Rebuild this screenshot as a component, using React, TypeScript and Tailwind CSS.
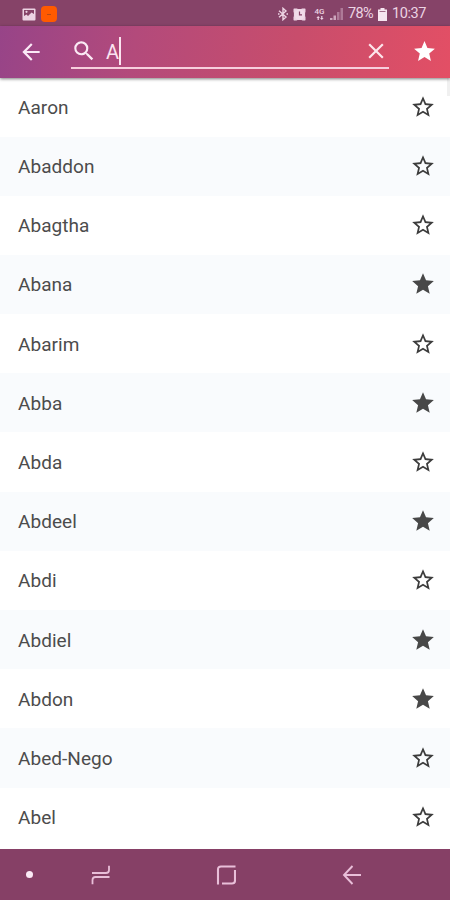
import React, { useState } from 'react';
import {
  MdArrowBack,
  MdClose,
  MdSearch,
  MdStar,
  MdStarBorder,
} from 'react-icons/md';

interface NameEntry {
  name: string;
  favorite: boolean;
}

const NAMES: NameEntry[] = [
  { name: 'Aaron', favorite: false },
  { name: 'Abaddon', favorite: false },
  { name: 'Abagtha', favorite: false },
  { name: 'Abana', favorite: true },
  { name: 'Abarim', favorite: false },
  { name: 'Abba', favorite: true },
  { name: 'Abda', favorite: false },
  { name: 'Abdeel', favorite: true },
  { name: 'Abdi', favorite: false },
  { name: 'Abdiel', favorite: true },
  { name: 'Abdon', favorite: true },
  { name: 'Abed-Nego', favorite: false },
  { name: 'Abel', favorite: false },
];

const StatusBar = () => (
  <div className="flex h-[26px] shrink-0 items-center bg-[#864368] pl-[22px] pr-[23px] pt-[2px] text-[#ecd3e3]">
    <svg className="h-[13px] w-[14px]" viewBox="0 0 14 13">
      <rect x="0.5" y="0.5" width="13" height="12" rx="1" fill="#ecd3e3" />
      <path d="M2 2h10v4L9.500 4.500 6 8 4.500 6.500 2 8z" fill="#864368" />
      <circle cx="4.500" cy="3.800" r="1.100" fill="#ecd3e3" />
    </svg>
    <div className="ml-[5px] flex h-4 w-4 items-center justify-center rounded-[4px] bg-[#ff5a00]">
      <div className="h-px w-1 bg-[#b84a10]" />
    </div>
    <div className="ml-auto flex items-center">
      <svg className="h-[14px] w-[10px]" viewBox="0 0 10 14" fill="none" stroke="currentColor" strokeWidth="1.400">
        <path d="M1 3.800L8 10 5 12.700V1.300L8 4 1 10.200M0 7h1.500M8.500 7H10" />
      </svg>
      <svg className="ml-[5px] h-[13px] w-[13px]" viewBox="0 0 13 13">
        <path d="M1 .5h3l.8.6h3.400l.8-.6h3l.5.5v3l-.4.8v3.400l.4.8v3l-.5.5H9.500L8.500 12h-4l-1 .5H1l-.5-.5V9l.4-.8V4.800L.5 4V1z" fill="currentColor" />
        <circle cx="6.500" cy="6.500" r="5.200" fill="#f1dcea" />
        <path d="M6.500 3.500v3.300H9" fill="none" stroke="#864368" strokeWidth="1.200" />
      </svg>
      <div className="ml-[8px] flex w-[11px] flex-col items-center">
        <span className="text-[8px] font-medium leading-[8px]">4G</span>
        <svg className="h-[4px] w-[8px]" viewBox="0 0 9 5">
          <path d="M0 2.500L2.200 0l2.200 2.500H3V5H1.500V2.500zM4.600 2.500H6V0h1.500v2.500H9L6.800 5z" fill="currentColor" />
        </svg>
      </div>
      <svg className="ml-[5px] h-[12px] w-[13px]" viewBox="0 0 13 12">
        <path d="M0 12v-2h2.500v2zM3.500 12V7.500H6V12z" fill="#cda7bd" />
        <path d="M7 12V4h2.500v8zM10.500 12V0H13v12z" fill="#ae7a98" />
      </svg>
      <span className="ml-[5px] w-[26px] whitespace-nowrap pt-px text-[14.5px] leading-none tracking-[-0.6px]">78%</span>
      <svg className="ml-[4px] h-[13px] w-[9px]" viewBox="0 0 9 13">
        <path d="M2.500 0h4v1.500H9V13H0V1.500h2.500z" fill="#f6e5f0" />
        <path d="M1.500 3h6v1h-6z" fill="#a36d8a" />
      </svg>
      <span className="ml-[5px] w-[35px] whitespace-nowrap pt-px text-[14.5px] leading-none tracking-[-0.4px]">10:37</span>
    </div>
  </div>
);

const SearchBar = () => (
  <header className="z-10 flex h-[52px] shrink-0 items-center bg-[linear-gradient(100deg,#974488_0%,#b34a7b_30%,#c84d6c_65%,#e34f65_100%)] pb-px pl-[18px] pr-[13px] text-white shadow-[0_1px_3px_rgba(0,0,0,0.5)]">
    <button aria-label="Back">
      <MdArrowBack className="h-[26px] w-[26px] text-[#fbe9f6]" />
    </button>
    <div className="ml-[27px] flex h-[34px] w-[318px] items-center border-b-2 border-[#f7cfdd]">
      <MdSearch className="h-[26px] w-[26px] text-[#fbe9f4]" />
      <span className="ml-[9px] pt-[2px] text-[20px] leading-none text-[#fbe4f0]">A</span>
      <span className="h-7 w-[2px] bg-[#fbe4f0]" />
      <button className="ml-auto" aria-label="Clear">
        <MdClose className="h-[26px] w-[26px] text-[#fde6ec]" />
      </button>
    </div>
    <button className="ml-auto" aria-label="Favorites">
      <MdStar className="h-[25px] w-[25px]" />
    </button>
  </header>
);

const NavigationBar = () => (
  <nav className="flex h-[51px] shrink-0 items-center bg-[#864066] pl-[26px] text-[#e9bfd9]">
    <span className="h-[7px] w-[7px] rounded-full bg-[#fbeaf5]" />
    <svg className="ml-[58px] h-5 w-5" viewBox="0 0 20 20" fill="none" stroke="currentColor" strokeWidth="1.800">
      <path d="M1 8H15q3 0 3-3V0.800" />
      <path d="M18.500 12H4.500q-3 0-3 3v4.200" />
    </svg>
    <svg className="ml-[105px] h-5 w-5" viewBox="0 0 20 20" fill="none" stroke="currentColor" strokeWidth="2.100">
      <path d="M2 19.500V4.500q0-3 3-3H19.500" />
      <path d="M19 5v10.500q0 3-3 3H6" />
    </svg>
    <svg className="ml-[106px] h-5 w-[19px]" viewBox="0 0 19 20" fill="none" stroke="currentColor" strokeWidth="1.900">
      <path d="M10.500 1L2 10l8.500 9M2 10h17" />
    </svg>
  </nav>
);

export default function App() {
  const [names, setNames] = useState<NameEntry[]>(NAMES);

  const toggleFavorite = (name: string) => {
    setNames(prev =>
      prev.map(entry => (entry.name === name ? { ...entry, favorite: !entry.favorite } : entry))
    );
  };

  return (
    <div className="flex h-[900px] w-[450px] flex-col overflow-hidden bg-white font-['Roboto',sans-serif]">
      <StatusBar />
      <SearchBar />
      <main className="relative h-[771px] overflow-hidden">
        <ul className="mt-[-0.7px]">
          {names.map((entry) => (
            <li
              key={entry.name}
              className="flex h-[59.2px] items-center justify-between pl-[18px] pr-[14px] odd:bg-white even:bg-[#f9fbfd]"
            >
              <span className="pt-px text-[19px] leading-none tracking-[0.05px] text-[#4c4c4c]">{entry.name}</span>
              <button onClick={() => toggleFavorite(entry.name)} aria-label="Toggle favorite">
                {entry.favorite ? (
                  <MdStar className="h-[26px] w-[26px] text-[#484848]" />
                ) : (
                  <MdStarBorder className="h-[26px] w-[26px] text-[#3c3c3c]" />
                )}
              </button>
            </li>
          ))}
        </ul>
        <div className="absolute right-0 top-0 h-[18px] w-[3px] bg-[#f0f0f0]" />
      </main>
      <NavigationBar />
    </div>
  );
}
